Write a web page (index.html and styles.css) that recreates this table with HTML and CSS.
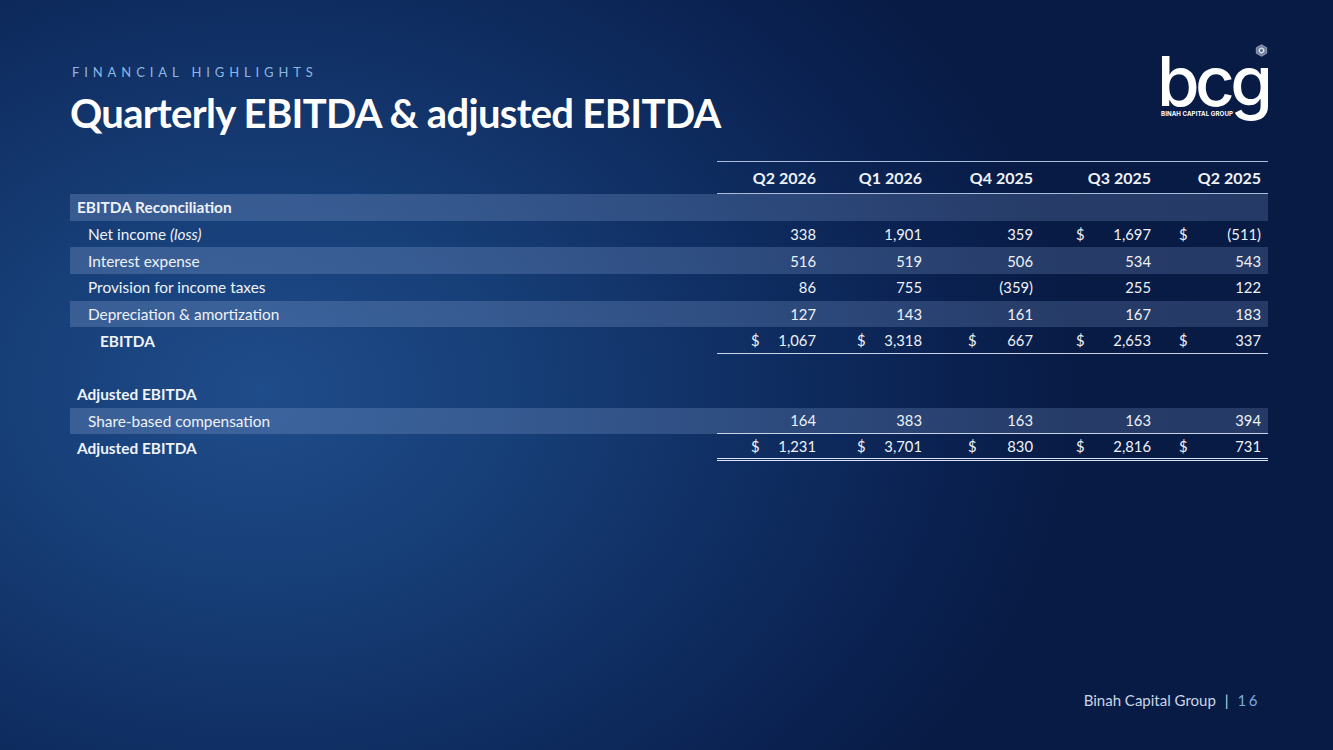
FILE: index.html
```html
<!DOCTYPE html>
<html lang="en">
<head>
<meta charset="utf-8">
<title>Quarterly EBITDA &amp; adjusted EBITDA</title>
<link rel="stylesheet" href="styles.css">
</head>
<body>
<div class="slide">
  <header class="top">
    <div class="titles">
      <div class="eyebrow">FINANCIAL HIGHLIGHTS</div>
      <h1 class="title">Quarterly EBITDA &amp; adjusted EBITDA</h1>
    </div>
    <div class="logo">
      <svg class="logo-mark" viewBox="0 0 14 14" width="13" height="13">
        <polygon points="7,0.8 12.6,4 12.6,10 7,13.2 1.4,10 1.4,4" fill="#6f7f99" stroke="#a9b4c6" stroke-width="0.8"/>
        <polygon points="7,3.6 10,5.3 10,8.7 7,10.4 4,8.7 4,5.3" fill="#dfe5ee"/>
        <polygon points="7,5.2 8.6,6.1 8.6,7.9 7,8.8 5.4,7.9 5.4,6.1" fill="#5d6c86"/>
      </svg>
      <div class="logo-word">bcg</div>
      <div class="logo-sub">BINAH CAPITAL GROUP</div>
    </div>
  </header>

  <div class="table">
    <div class="row head">
      <div class="label"></div>
      <div class="cell c1"><span class="num">Q2 2026</span></div>
      <div class="cell c2"><span class="num">Q1 2026</span></div>
      <div class="cell c3"><span class="num">Q4 2025</span></div>
      <div class="cell c4"><span class="num">Q3 2025</span></div>
      <div class="cell c5"><span class="num">Q2 2025</span></div>
    </div>

    <div class="row band">
      <div class="label bold">EBITDA Reconciliation</div>
      <div class="cell c1"></div><div class="cell c2"></div><div class="cell c3"></div><div class="cell c4"></div><div class="cell c5"></div>
    </div>

    <div class="row">
      <div class="label ind1">Net income <em>(loss)</em></div>
      <div class="cell c1"><span class="num">338</span></div>
      <div class="cell c2"><span class="num">1,901</span></div>
      <div class="cell c3"><span class="num">359</span></div>
      <div class="cell c4"><span class="cur">$</span><span class="num">1,697</span></div>
      <div class="cell c5"><span class="cur">$</span><span class="num paren">(511)</span></div>
    </div>

    <div class="row band">
      <div class="label ind1">Interest expense</div>
      <div class="cell c1"><span class="num">516</span></div>
      <div class="cell c2"><span class="num">519</span></div>
      <div class="cell c3"><span class="num">506</span></div>
      <div class="cell c4"><span class="num">534</span></div>
      <div class="cell c5"><span class="num">543</span></div>
    </div>

    <div class="row">
      <div class="label ind1">Provision for income taxes</div>
      <div class="cell c1"><span class="num">86</span></div>
      <div class="cell c2"><span class="num">755</span></div>
      <div class="cell c3"><span class="num paren">(359)</span></div>
      <div class="cell c4"><span class="num">255</span></div>
      <div class="cell c5"><span class="num">122</span></div>
    </div>

    <div class="row band">
      <div class="label ind1">Depreciation &amp; amortization</div>
      <div class="cell c1"><span class="num">127</span></div>
      <div class="cell c2"><span class="num">143</span></div>
      <div class="cell c3"><span class="num">161</span></div>
      <div class="cell c4"><span class="num">167</span></div>
      <div class="cell c5"><span class="num">183</span></div>
    </div>

    <div class="row total">
      <div class="label ind2 bold">EBITDA</div>
      <div class="cell c1"><span class="cur">$</span><span class="num">1,067</span></div>
      <div class="cell c2"><span class="cur">$</span><span class="num">3,318</span></div>
      <div class="cell c3"><span class="cur">$</span><span class="num">667</span></div>
      <div class="cell c4"><span class="cur">$</span><span class="num">2,653</span></div>
      <div class="cell c5"><span class="cur">$</span><span class="num">337</span></div>
    </div>

    <div class="row blank">
      <div class="label"></div>
    </div>

    <div class="row">
      <div class="label bold">Adjusted EBITDA</div>
    </div>

    <div class="row band total">
      <div class="label ind1">Share-based compensation</div>
      <div class="cell c1"><span class="num">164</span></div>
      <div class="cell c2"><span class="num">383</span></div>
      <div class="cell c3"><span class="num">163</span></div>
      <div class="cell c4"><span class="num">163</span></div>
      <div class="cell c5"><span class="num">394</span></div>
    </div>

    <div class="row grand">
      <div class="label bold">Adjusted EBITDA</div>
      <div class="cell c1"><span class="cur">$</span><span class="num">1,231</span></div>
      <div class="cell c2"><span class="cur">$</span><span class="num">3,701</span></div>
      <div class="cell c3"><span class="cur">$</span><span class="num">830</span></div>
      <div class="cell c4"><span class="cur">$</span><span class="num">2,816</span></div>
      <div class="cell c5"><span class="cur">$</span><span class="num">731</span></div>
    </div>
  </div>

  <footer class="foot">
    <span class="foot-name">Binah Capital Group</span>
    <span class="foot-sep">|</span>
    <span class="foot-page">16</span>
  </footer>
</div>
</body>
</html>
```

FILE: styles.css
```css
* { box-sizing: border-box; }

html, body {
  margin: 0;
  padding: 0;
}

body {
  width: 1333px;
  height: 750px;
  overflow: hidden;
  font-family: "Lato", "Open Sans", sans-serif;
  color: #eef2f8;
}

.slide {
  width: 1333px;
  height: 750px;
  display: flex;
  flex-direction: column;
  padding: 0 65px 0 70px;
  background:
    radial-gradient(ellipse 820px 620px at 260px 390px, #1f4c8a 0%, #173f78 30%, #0f2d61 62%, #0a2150 85%, #081b45 100%);
  background-color: #081b45;
}

/* Header */
.top {
  display: flex;
  justify-content: space-between;
  align-items: flex-start;
  height: 161px;
}

.titles {
  padding-top: 64px;
}

.eyebrow {
  font-size: 13px;
  letter-spacing: 4.9px;
  color: #8db6e4;
  line-height: 16px;
  padding-left: 2px;
}

.title {
  margin: 9px 0 0 0;
  font-size: 40px;
  font-weight: 700;
  letter-spacing: -0.7px;
  color: #ffffff;
  line-height: 48px;
}

.logo {
  position: relative;
  width: 110px;
  margin-top: 50px;
  margin-right: -3px;
}

.logo-mark {
  position: absolute;
  right: 3px;
  top: -6px;
}

.logo-word {
  font-family: "Inter", "Lato", sans-serif;
  font-weight: 500;
  font-size: 69px;
  line-height: 54px;
  height: 58px;
  letter-spacing: -4.6px;
  color: #ffffff;
  margin-left: -4px;
  padding-top: 4px;
}

.logo-sub {
  font-family: "Inter", "Lato", sans-serif;
  font-weight: 700;
  font-size: 6.1px;
  letter-spacing: 0.1px;
  color: #ffffff;
  margin-top: 2px;
  width: 76px;
}

/* Table */
.table {
  display: flex;
  flex-direction: column;
  width: 1198px;
  font-size: 15.4px;
}

.row {
  display: grid;
  grid-template-columns: 647px 106px 106px 111px 118px 110px;
  height: 26.7px;
  align-items: center;
}

.row.head {
  height: 33px;
  font-weight: 700;
  font-size: 16px;
}

.row.head .cell {
  height: 100%;
  border-top: 1px solid #a9bedb;
  border-bottom: 1.5px solid #a9bedb;
}

.row.band {
  background: linear-gradient(90deg, rgba(128, 156, 205, 0.32) 0%, rgba(128, 156, 205, 0.28) 50%, rgba(128, 156, 205, 0.24) 100%);
}

.row.total .cell {
  height: 100%;
  border-bottom: 1px solid #c7d4e6;
}

.row.grand .cell {
  height: 100%;
  border-bottom: 3.5px double #dce5f1;
}

.label {
  padding-left: 7px;
  white-space: nowrap;
}

.label.ind1 { padding-left: 18px; }
.label.ind2 { padding-left: 30px; }
.bold { font-weight: 700; }

.label em {
  font-style: italic;
}

.cell {
  display: flex;
  align-items: center;
  justify-content: space-between;
  padding-right: 7px;
  font-size: 14.8px;
}

.row.head .cell {
  font-size: 16px;
}

.cell .num {
  margin-left: auto;
}

.c1 { padding-left: 34px; }
.c2 { padding-left: 34px; }
.c3 { padding-left: 39px; }
.c4 { padding-left: 36px; }
.c5 { padding-left: 21px; }

/* Footer */
.foot {
  margin-top: auto;
  margin-bottom: 41px;
  align-self: flex-end;
  margin-right: 8px;
  display: flex;
  align-items: center;
  gap: 9px;
  font-size: 15px;
  color: #c9d5e6;
}

.foot-sep {
  color: #c9d5e6;
}

.foot-page {
  color: #7ea9dc;
  letter-spacing: 2.5px;
}
```
